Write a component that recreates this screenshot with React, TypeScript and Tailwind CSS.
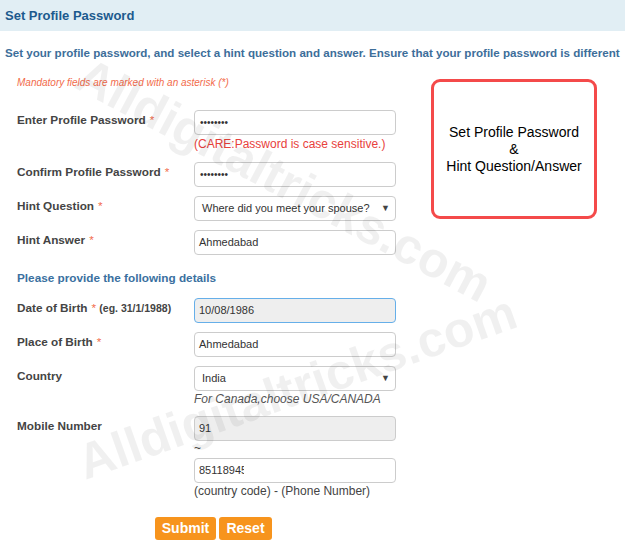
import type { ReactNode } from 'react';

const labelCls = 'w-[194px] shrink-0 pl-[17px] pt-[3px] text-[11.75px] font-bold leading-[14px] text-[#444]';
const boxCls = 'h-[25px] w-[202px] rounded-[4px] border border-[#ccc] flex items-center text-[11px] text-[#333]';

function Star() {
  return <span className="ml-[4px] font-normal text-[#f26b4b]">*</span>;
}

function Row({ label, children, className = '' }: { label: ReactNode; children: ReactNode; className?: string }) {
  return (
    <div className={`flex ${className}`}>
      <div className={labelCls}>{label}</div>
      <div className="flex flex-col">{children}</div>
    </div>
  );
}

function Dots() {
  return <span className="pl-[5px] text-[10px] text-[#333]">••••••••</span>;
}

function Select({ value }: { value: string }) {
  return (
    <div className={`${boxCls} justify-between bg-white pl-[7px] pr-[5px]`}>
      <span>{value}</span>
      <span className="text-[9px] text-[#444]">▼</span>
    </div>
  );
}

export default function App() {
  return (
    <div className="relative h-[551px] w-[625px] overflow-hidden bg-white font-['Liberation_Sans',Arial,sans-serif]">
      <div className="flex h-[31px] items-center bg-[#e1eef4] px-[5px] text-[13px] font-bold text-[#1c5a8e]">
        Set Profile Password
      </div>
      <div className="mt-[15px] whitespace-nowrap px-[5px] text-[11.6px] font-bold leading-[14px] text-[#3d6e9a]">
        Set your profile password, and select a hint question and answer. Ensure that your profile password is different
      </div>

      <div className="mt-[17px] flex">
        <div className="flex w-[431px] shrink-0 flex-col">
          <div className="pl-[17px] text-[10px] italic leading-[12px] text-[#f26b4b]">
            Mandatory fields are marked with an asterisk (*)
          </div>

          <Row label={<>Enter Profile Password<Star /></>} className="mt-[21px]">
            <div className={boxCls}><Dots /></div>
            <div className="mt-[2px] text-[12px] leading-[14px] text-[#e8413c]">(CARE:Password is case sensitive.)</div>
          </Row>

          <Row label={<>Confirm Profile Password<Star /></>} className="mt-[11px]">
            <div className={boxCls}><Dots /></div>
          </Row>

          <Row label={<>Hint Question<Star /></>} className="mt-[9px]">
            <Select value="Where did you meet your spouse?" />
          </Row>

          <Row label={<>Hint Answer<Star /></>} className="mt-[9px]">
            <div className={`${boxCls} pl-[4px]`}>Ahmedabad</div>
          </Row>

          <div className="mt-[16px] pl-[17px] text-[11.75px] font-bold leading-[14px] text-[#3a70a0]">
            Please provide the following details
          </div>

          <Row
            label={<>Date of Birth<Star /> <span className="text-[10.5px]">(eg. 31/1/1988)</span></>}
            className="mt-[13px]"
          >
            <div className="flex h-[25px] w-[202px] items-center rounded-[4px] border border-[#66afe9] bg-[#eee] pl-[4px] text-[11px] text-[#333]">
              10/08/1986
            </div>
          </Row>

          <Row label={<>Place of Birth<Star /></>} className="mt-[9px]">
            <div className={`${boxCls} pl-[4px]`}>Ahmedabad</div>
          </Row>

          <Row label="Country" className="mt-[9px]">
            <Select value="India" />
            <div className="mt-[1px] text-[12px] italic leading-[14px] text-[#555]">For Canada,choose USA/CANADA</div>
          </Row>

          <Row label="Mobile Number" className="mt-[10px]">
            <div className={`${boxCls} bg-[#eee] pl-[4px]`}>91</div>
            <div className="h-[17px] text-[12px] leading-[14px] text-[#444]">~</div>
            <div className={`${boxCls} pl-[4px]`}>
              <span className="w-[45px] overflow-hidden whitespace-nowrap">85118945</span>
            </div>
            <div className="mt-[1px] text-[12px] leading-[14px] text-[#444]">(country code) - (Phone Number)</div>
          </Row>

          <div className="mt-[19px] flex gap-[3px] pl-[155px]">
            <button className="h-[23px] w-[61px] rounded-[3px] bg-[#f7941d] text-[14px] font-bold text-white">Submit</button>
            <button className="h-[23px] w-[53px] rounded-[3px] bg-[#f7941d] text-[14px] font-bold text-white">Reset</button>
          </div>
        </div>

        <div className="mt-[2px] flex h-[140px] w-[166px] items-center justify-center rounded-[9px] border-[3px] border-[#f44a4a] text-center text-[14px] leading-[17px] text-black">
          <div>
            Set Profile Password
            <br />&amp;
            <br />Hint Question/Answer
          </div>
        </div>
      </div>

      <div className="pointer-events-none absolute left-[284px] top-[180px] -translate-x-1/2 -translate-y-1/2 rotate-[28deg] whitespace-nowrap text-[50px] font-bold leading-none text-black/[0.06]">
        Alldigitaltricks.com
      </div>
      <div className="pointer-events-none absolute left-[297px] top-[387px] -translate-x-1/2 -translate-y-1/2 -rotate-[19.5deg] whitespace-nowrap text-[50px] font-bold leading-none text-black/[0.06]">
        Alldigitaltricks.com
      </div>
    </div>
  );
}
